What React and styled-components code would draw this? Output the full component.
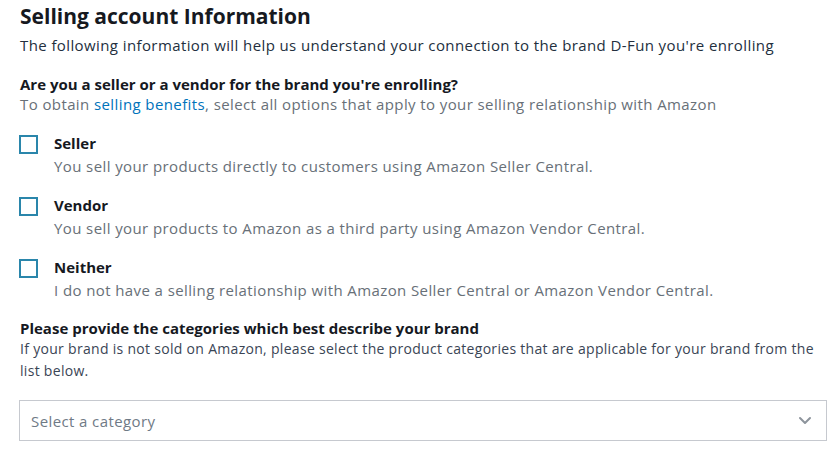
import React from 'react';
import styled, { createGlobalStyle } from 'styled-components';

const GlobalStyle = createGlobalStyle`
  body {
    margin: 0;
    background: #ffffff;
    font-family: "Open Sans", "Noto Sans", sans-serif;
  }
`;

const options = [
  { label: 'Seller', text: 'You sell your products directly to customers using Amazon Seller Central.' },
  { label: 'Vendor', text: 'You sell your products to Amazon as a third party using Amazon Vendor Central.' },
  { label: 'Neither', text: 'I do not have a selling relationship with Amazon Seller Central or Amazon Vendor Central.' },
];

const App = () => {
  return (
    <Page>
      <GlobalStyle />
      <Title>Selling account Information</Title>
      <Intro>The following information will help us understand your connection to the brand D-Fun you're enrolling</Intro>

      <Section $top={16}>
        <Question>Are you a seller or a vendor for the brand you're enrolling?</Question>
        <Hint $lh={20}>
          To obtain <Link href="#">selling benefits</Link>, select all options that apply to your selling relationship with Amazon
        </Hint>
      </Section>

      <OptionList>
        {options.map((o) => (
          <Option key={o.label}>
            <Box role="checkbox" aria-checked="false" />
            <OptionBody>
              <OptionLabel>{o.label}</OptionLabel>
              <OptionText>{o.text}</OptionText>
            </OptionBody>
          </Option>
        ))}
      </OptionList>

      <Section $top={16}>
        <Question>Please provide the categories which best describe your brand</Question>
        <Hint $lh={22} $dark>
          If your brand is not sold on Amazon, please select the product categories that are applicable for your brand from the list below.
        </Hint>
      </Section>

      <Select>
        <Placeholder>Select a category</Placeholder>
        <svg width="14" height="9" viewBox="0 0 14 9">
          <path d="M2 2 L7 7 L12 2" fill="none" stroke="#8d949c" strokeWidth="2" strokeLinecap="round" strokeLinejoin="round" />
        </svg>
      </Select>
    </Page>
  );
};

const Page = styled.div`
  padding: 0 12px 0 19px;
`;

const Title = styled.h1`
  margin: 0;
  padding-left: 1px;
  font-size: 21px;
  line-height: 32px;
  font-weight: 700;
  color: #16191f;
`;

const Intro = styled.p`
  margin: 0;
  padding-left: 1px;
  font-size: 15px;
  letter-spacing: 0.4px;
  line-height: 26px;
  color: #232f3e;
`;

const Section = styled.div`
  margin-top: ${(p) => p.$top}px;
  padding-left: 1px;
`;

const Question = styled.div`
  font-size: 15px;
  line-height: 20px;
  font-weight: 700;
  color: #16191f;
`;

const Hint = styled.div`
  font-size: ${(p) => (p.$dark ? 14 : 15)}px;
  letter-spacing: ${(p) => (p.$dark ? 0.3 : 0.4)}px;
  line-height: ${(p) => p.$lh}px;
  color: ${(p) => (p.$dark ? '#3a4555' : '#687078')};
`;

const Link = styled.a`
  color: #0073bb;
  text-decoration: none;
`;

const OptionList = styled.div`
  display: flex;
  flex-direction: column;
  gap: 16px;
  margin-top: 18px;
`;

const Option = styled.label`
  display: flex;
  align-items: flex-start;
  gap: 16px;
`;

const Box = styled.span`
  display: block;
  margin-top: 3px;
  width: 19px;
  height: 19px;
  box-sizing: border-box;
  border: 2px solid #2a86ab;
  background: #fff;
  flex-shrink: 0;
`;

const OptionBody = styled.div`
  display: flex;
  flex-direction: column;
`;

const OptionLabel = styled.span`
  font-size: 15px;
  line-height: 23px;
  font-weight: 700;
  color: #16191f;
`;

const OptionText = styled.span`
  font-size: 15px;
  letter-spacing: 0.4px;
  line-height: 23px;
  color: #687078;
`;

const Select = styled.div`
  display: flex;
  align-items: center;
  justify-content: space-between;
  margin-top: 18px;
  height: 41px;
  box-sizing: border-box;
  border: 1px solid #c6c9cf;
  padding: 0 14px 0 11px;
`;

const Placeholder = styled.span`
  font-size: 15px;
  letter-spacing: 0.4px;
  color: #6f7a86;
`;

export default App;
